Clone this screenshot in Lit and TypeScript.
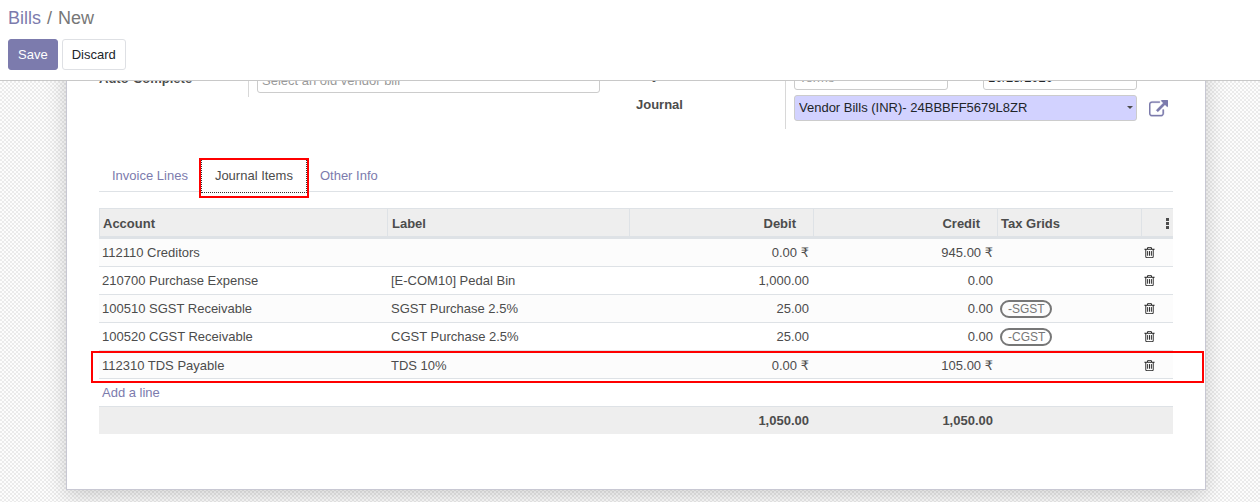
import { LitElement, html, css, svg } from "lit";
import { customElement, state } from "lit/decorators.js";

interface JournalItem {
  account: string;
  label: string;
  debit: string;
  credit: string;
  currency?: string;
  grid?: string;
  marked?: boolean;
}

const ITEMS: JournalItem[] = [
  { account: "112110 Creditors", label: "", debit: "0.00", credit: "945.00", currency: "₹" },
  { account: "210700 Purchase Expense", label: "[E-COM10] Pedal Bin", debit: "1,000.00", credit: "0.00" },
  { account: "100510 SGST Receivable", label: "SGST Purchase 2.5%", debit: "25.00", credit: "0.00", grid: "-SGST" },
  { account: "100520 CGST Receivable", label: "CGST Purchase 2.5%", debit: "25.00", credit: "0.00", grid: "-CGST" },
  { account: "112310 TDS Payable", label: "TDS 10%", debit: "0.00", credit: "105.00", currency: "₹", marked: true },
];

const TABS = ["Invoice Lines", "Journal Items", "Other Info"];

const trash = svg`<svg class="trash" viewBox="0 0 1792 1792" aria-hidden="true"><path d="M704 736v576q0 14-9 23t-23 9h-64q-14 0-23-9t-9-23v-576q0-14 9-23t23-9h64q14 0 23 9t9 23zm256 0v576q0 14-9 23t-23 9h-64q-14 0-23-9t-9-23v-576q0-14 9-23t23-9h64q14 0 23 9t9 23zm256 0v576q0 14-9 23t-23 9h-64q-14 0-23-9t-9-23v-576q0-14 9-23t23-9h64q14 0 23 9t9 23zm128 724v-948h-896v948q0 22 7 40.5t14.5 27 10.5 8.5h832q3 0 10.5-8.5t14.5-27 7-40.5zm-672-1076h448l-48-117q-7-9-17-11h-317q-10 2-17 11zm928 32v64q0 14-9 23t-23 9h-96v948q0 83-47 143.5t-113 60.5h-832q-66 0-113-58.5t-47-141.5v-952h-96q-14 0-23-9t-9-23v-64q0-14 9-23t23-9h309l70-167q15-37 54-63t79-26h320q40 0 79 26t54 63l70 167h309q14 0 23 9t9 23z"/></svg>`;

const externalLink = svg`<svg class="external" viewBox="0 0 1792 1600" aria-hidden="true"><path d="M1408 928v320q0 119-84.5 203.5t-203.5 84.5h-832q-119 0-203.5-84.5t-84.5-203.5v-832q0-119 84.5-203.5t203.5-84.5h704q14 0 23 9t9 23v64q0 14-9 23t-23 9h-704q-66 0-113 47t-47 113v832q0 66 47 113t113 47h832q66 0 113-47t47-113v-320q0-14 9-23t23-9h64q14 0 23 9t9 23zm384-864v512q0 26-19 45t-45 19-45-19l-176-176-652 652q-10 10-23 10t-23-10l-114-114q-10-10-10-23t10-23l652-652-176-176q-19-19-19-45t19-45 45-19h512q26 0 45 19t19 45z"/></svg>`;

const kebab = svg`<svg class="kebab" viewBox="0 0 3 11" aria-hidden="true"><path d="M0 0h3v3H0zM0 4h3v3H0zM0 8h3v3H0z"/></svg>`;

@customElement("app-root")
export class AppRoot extends LitElement {
  @state() private activeTab = "Journal Items";

  static styles = css`
    :host {
      display: flex;
      flex-direction: column;
      height: 100vh;
      overflow: hidden;
      font: 13px/20px "Liberation Sans", Arial, sans-serif;
      color: #4c4c4c;
    }
    * { box-sizing: border-box; }
    a { color: #7c7bad; text-decoration: none; }
    button, input, select { font: inherit; color: inherit; margin: 0; }
    button { cursor: pointer; }

    .control-panel {
      flex: none;
      padding: 5px 8px 10px;
      border-bottom: 1px solid #c8c8c8;
      background: #fff;
    }
    .breadcrumb {
      display: flex;
      gap: 6px;
      margin: 0 0 8px;
      padding: 0;
      list-style: none;
      font-size: 18px;
      line-height: 26px;
      color: #777;
    }
    .actions { display: flex; gap: 4px; }
    .btn {
      height: 31px;
      padding: 0 9px;
      border: 1px solid #dee0e4;
      border-radius: 3px;
      background: #fff;
      color: #212529;
    }
    .btn.primary { border-color: #7c7bad; background: #7c7bad; color: #fff; }

    .content {
      flex: 1;
      min-height: 0;
      overflow: hidden;
      padding: 0 54px 12px 66px;
      background: repeating-conic-gradient(#ebebeb 0 25%, #fdfdfd 0 50%) 0 0 / 4px 4px;
    }
    .sheet {
      max-width: 1140px;
      margin: -24px auto 0;
      padding: 4px 32px 55px;
      border: 1px solid #c8c8d3;
      border-top: 0;
      background: #fff;
      box-shadow: 0 5px 20px rgba(0, 0, 0, 0.18);
    }

    .groups { display: grid; grid-template-columns: 1fr 1fr; align-items: start; }
    .group { display: grid; grid-template-columns: 149px 1fr; }
    .name { padding-top: 8px; font-weight: bold; }
    .name.second { padding-top: 4px; }
    .name.third { padding-top: 0; }
    .value {
      display: flex;
      border-left: 1px solid #d8d8d8;
      padding: 6px 36px 4px 8px;
    }
    .value.pair { padding: 3px 36px 5px 8px; gap: 14px; }
    .value.linked { padding: 0 5px 8px 8px; gap: 12px; }
    .box {
      flex: 1;
      width: 100%;
      min-width: 0;
      height: 26px;
      padding: 0 4px;
      border: 1px solid #ccc;
      border-radius: 3px;
      background: #fff;
      color: #212529;
      outline: 0;
      appearance: none;
    }
    .box::placeholder { color: #999; opacity: 1; }
    .dropdown { position: relative; display: flex; flex: 1; min-width: 0; }
    .dropdown::after {
      content: "";
      position: absolute;
      right: 4px;
      top: 11px;
      border: 3px solid transparent;
      border-top-color: #4c4c4c;
      border-bottom: 0;
      pointer-events: none;
    }
    .box.required { background: #d2d2ff; }
    .or { flex: none; width: 7px; height: 26px; line-height: 26px; }
    .open {
      display: flex;
      width: 19px;
      padding: 5px 0 0;
      border: 0;
      background: none;
      color: #7c7bad;
    }
    .external { width: 19px; height: 17px; fill: currentColor; stroke: currentColor; stroke-width: 30; }

    .tabs {
      display: flex;
      height: 32px;
      margin-top: 31px;
      border-bottom: 1px solid #dee2e6;
    }
    .tab {
      position: relative;
      height: 33px;
      padding: 0 12px;
      border: 1px solid transparent;
      border-top: 0;
      background: none;
      color: #7c7bad;
    }
    .tab.active {
      padding: 0 13px;
      border: 1px dotted #333;
      border-top: 0;
      background: #fff;
      color: #4c4c4c;
    }
    .tab.active::after {
      content: "";
      position: absolute;
      inset: -2px -3px -6px;
      border: 2px solid #f00;
      pointer-events: none;
    }

    .items {
      width: 100%;
      margin-top: 16px;
      table-layout: fixed;
      border-collapse: separate;
      border-spacing: 0;
    }
    .c-label { width: 242px; }
    .c-amount { width: 184px; }
    .c-grid { width: 144px; }
    .c-tools { width: 32px; }
    th {
      height: 31px;
      padding: 2px 3px 0;
      border: 1px solid #dee2e6;
      border-width: 1px 0 3px 1px;
      background: #eee;
      text-align: left;
    }
    th.tools { padding-right: 4px; }
    td {
      height: 28px;
      padding: 0 3px;
      border-bottom: 1px solid #dee2e6;
    }
    td.label, th.label { padding-left: 4px; }
    .item:nth-child(odd) td { background: #fcfcfc; }
    .amount { padding-right: 4px; text-align: right; }
    th.amount { padding-right: 17px; }
    .currency { font-family: "DejaVu Sans", sans-serif; line-height: 1; }
    .marked { position: relative; }
    .marked td { padding-top: 2px; }
    .marked td:first-child::after {
      content: "";
      position: absolute;
      inset: 0 -31px -4px -8px;
      border: 2px solid #f00;
      pointer-events: none;
    }
    .tag {
      display: block;
      width: max-content;
      padding: 0 5px 0 6px;
      border: 2px solid #777;
      border-radius: 9px;
      font-size: 12px;
      line-height: 14px;
      color: #777;
    }
    .icon-btn {
      display: block;
      padding: 0;
      border: 0;
      background: none;
    }
    .trash { display: block; width: 13px; height: 13px; fill: #222; }
    .tools .icon-btn { margin-left: auto; }
    td.remove { padding-left: 2px; }
    .kebab { display: block; width: 3px; height: 11px; fill: #4c4c4c; }
    tfoot td { height: 27px; border: 0; background: #eee; font-weight: bold; }
  `;

  private renderAmount(value: string, currency?: string) {
    return html`<td class="amount">${value}${currency ? html` <span class="currency">${currency}</span>` : ""}</td>`;
  }

  private renderItem(item: JournalItem) {
    return html`<tr class="item ${item.marked ? "marked" : ""}">
      <td>${item.account}</td>
      <td class="label">${item.label}</td>
      ${this.renderAmount(item.debit, item.currency)}
      ${this.renderAmount(item.credit, item.currency)}
      <td>${item.grid ? html`<span class="tag">${item.grid}</span>` : ""}</td>
      <td class="remove"><button class="icon-btn" aria-label="Delete row">${trash}</button></td>
    </tr>`;
  }

  render() {
    return html`
      <header class="control-panel">
        <ol class="breadcrumb">
          <li><a href="#">Bills</a></li>
          <li aria-hidden="true">/</li>
          <li>New</li>
        </ol>
        <div class="actions">
          <button class="btn primary">Save</button>
          <button class="btn">Discard</button>
        </div>
      </header>
      <main class="content">
        <section class="sheet">
          <div class="groups">
            <div class="group">
              <label class="name" for="auto">Auto-Complete</label>
              <div class="value">
                <div class="dropdown">
                  <input class="box" id="auto" placeholder="Select an old vendor bill" />
                </div>
              </div>
            </div>
            <div class="group">
              <label class="name second" for="terms">Payment</label>
              <div class="value pair">
                <input class="box" id="terms" placeholder="Terms" />
                <span class="or">or</span>
                <input class="box" aria-label="Due date" value="10/28/2020" />
              </div>
              <label class="name third" for="journal">Journal</label>
              <div class="value linked">
                <div class="dropdown">
                  <select class="box required" id="journal">
                    <option>Vendor Bills (INR)- 24BBBFF5679L8ZR</option>
                  </select>
                </div>
                <button class="open" aria-label="Open journal">${externalLink}</button>
              </div>
            </div>
          </div>
          <div class="tabs" role="tablist">
            ${TABS.map(
              (tab) => html`<button
                class="tab ${tab === this.activeTab ? "active" : ""}"
                role="tab"
                aria-selected=${tab === this.activeTab}
                @click=${() => (this.activeTab = tab)}
              >${tab}</button>`,
            )}
          </div>
          <table class="items">
            <colgroup>
              <col /><col class="c-label" /><col class="c-amount" /><col class="c-amount" /><col class="c-grid" /><col class="c-tools" />
            </colgroup>
            <thead>
              <tr>
                <th>Account</th>
                <th class="label">Label</th>
                <th class="amount">Debit</th>
                <th class="amount">Credit</th>
                <th>Tax Grids</th>
                <th class="tools"><button class="icon-btn" aria-label="Optional columns">${kebab}</button></th>
              </tr>
            </thead>
            <tbody>
              ${ITEMS.map((item) => this.renderItem(item))}
              <tr><td colspan="6"><a href="#">Add a line</a></td></tr>
            </tbody>
            <tfoot>
              <tr>
                <td></td>
                <td></td>
                <td class="amount">1,050.00</td>
                <td class="amount">1,050.00</td>
                <td></td>
                <td></td>
              </tr>
            </tfoot>
          </table>
        </section>
      </main>
    `;
  }
}
